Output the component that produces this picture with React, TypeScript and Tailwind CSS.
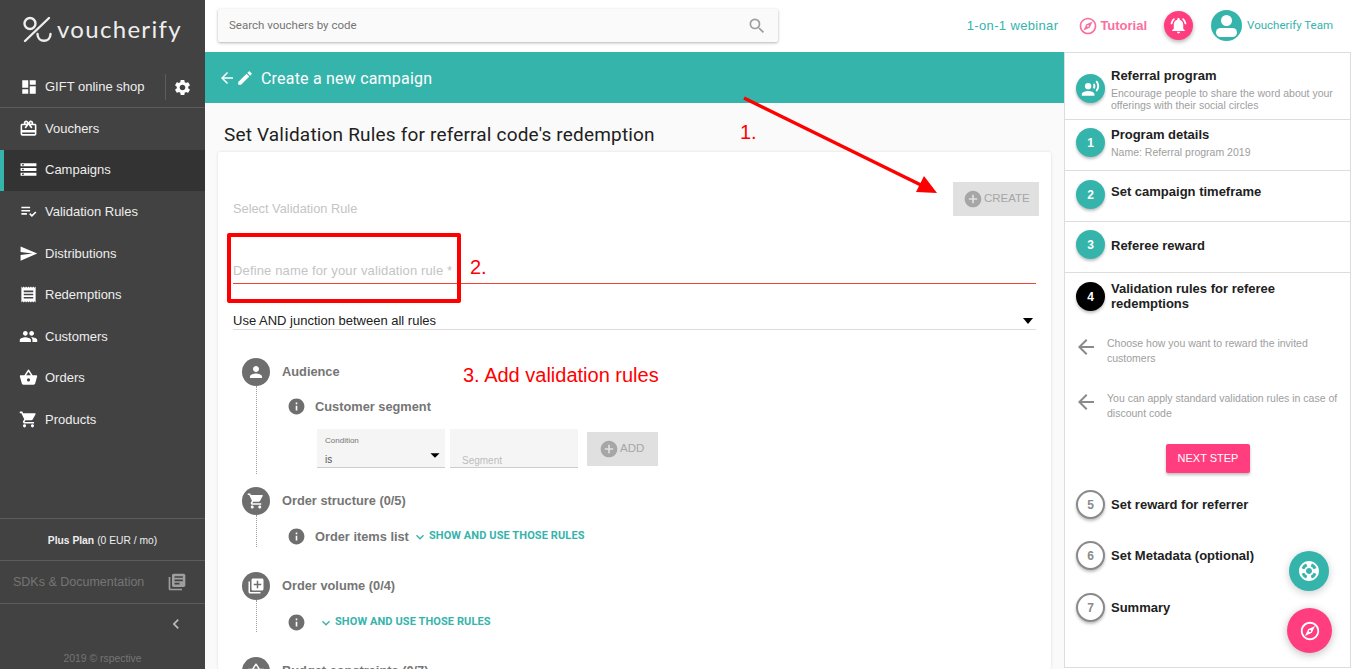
import {
  MdAddCircle,
  MdArrowBack,
  MdArrowDropDown,
  MdCardGiftcard,
  MdChevronLeft,
  MdDashboard,
  MdEdit,
  MdExpandMore,
  MdInfo,
  MdLibraryAdd,
  MdLibraryBooks,
  MdNotificationsActive,
  MdOutlineExplore,
  MdPeople,
  MdPerson,
  MdPlaylistAddCheck,
  MdReceipt,
  MdRecordVoiceOver,
  MdSearch,
  MdSend,
  MdSettings,
  MdShoppingBasket,
  MdShoppingCart,
  MdStorage,
  MdSupport,
} from 'react-icons/md';

const navItems = [
  { label: 'Vouchers', icon: MdCardGiftcard },
  { label: 'Campaigns', icon: MdStorage, active: true },
  { label: 'Validation Rules', icon: MdPlaylistAddCheck },
  { label: 'Distributions', icon: MdSend },
  { label: 'Redemptions', icon: MdReceipt },
  { label: 'Customers', icon: MdPeople },
  { label: 'Orders', icon: MdShoppingBasket },
  { label: 'Products', icon: MdShoppingCart },
];

function Sidebar() {
  return (
    <aside className="w-[205px] h-full shrink-0 flex flex-col bg-[#424242] text-[#eeeeee] font-['Liberation_Sans',sans-serif]">
      <div className="h-[65px] shrink-0 flex items-center pl-[22px] pb-[6px]">
        <svg width="30" height="28" viewBox="0 0 30 28" fill="none" stroke="#eeeeee" strokeWidth="2.4" strokeLinecap="round">
          <circle cx="8" cy="7.5" r="5.5" />
          <path d="M27 2 3 25" />
          <path d="M15.5 18c0 9 13 9 13 0" />
        </svg>
        <span className="ml-[5px] mt-[-2px] text-[24px] leading-none font-['Lato',sans-serif] font-normal tracking-[1.3px] text-[#eeeeee]">voucherify</span>
      </div>
      <div className="h-[43px] shrink-0 flex items-center pl-[20px] pt-[2px] border-b border-[#5c5c5c]">
        <MdDashboard size={18} className="text-white" />
        <span className="ml-[7px] text-[13px] flex-1">GIFT online shop</span>
        <div className="w-[1px] h-[26px] bg-[#5c5c5c]" />
        <MdSettings size={19} className="text-white ml-[7px] mr-[13px]" />
      </div>
      <nav className="flex flex-col">
        {navItems.map((item) => (
          <div
            key={item.label}
            className={`h-[41.5px] flex items-center text-[13px] ${
              item.active ? 'bg-[#333333] border-l-[4px] border-[#35b4ab] pl-[16px] pb-[1px]' : 'pl-[20px]'
            }`}
          >
            <item.icon size={19} className="text-white shrink-0 -ml-[1px]" />
            <span className="ml-[7px]">{item.label}</span>
          </div>
        ))}
      </nav>
      <div className="mt-auto">
        <div className="h-[42px] flex items-center justify-center pt-[2px] border-t border-[#5c5c5c] text-[10.3px] text-[#eeeeee]">
          <b className="mr-[3px]">Plus Plan</b> (0 EUR / mo)
        </div>
        <div className="h-[43px] flex items-center pl-[13px] border-t border-[#5c5c5c] text-[12.5px] text-[#757575]">
          <span className="flex-1">SDKs &amp; Documentation</span>
          <MdLibraryBooks size={20} className="text-[#9e9e9e] mr-[18px]" />
        </div>
        <div className="h-[40px] flex items-center justify-end border-t border-[#5c5c5c] pr-[19px]">
          <MdChevronLeft size={20} className="text-[#bdbdbd]" />
        </div>
        <div className="h-[26px] pt-[8px] text-center text-[10.4px] leading-[15px] text-[#757575]">2019 © rspective</div>
      </div>
    </aside>
  );
}

function TopBar() {
  return (
    <header className="h-[52px] shrink-0 flex items-center pb-[1px] bg-white font-['Liberation_Sans',sans-serif]">
      <div className="ml-[13px] w-[560px] h-[33px] flex items-center justify-between px-[11px] bg-[#fafafa] rounded-[2px] shadow-[0_1px_3px_rgba(0,0,0,0.3)]">
        <span className="text-[11.5px] text-[#757575] font-['Roboto',sans-serif]">Search vouchers by code</span>
        <MdSearch size={20} className="text-[#9e9e9e]" />
      </div>
      <span className="ml-auto text-[13px] text-[#35b4ab] tracking-[0.35px]">1-on-1 webinar</span>
      <span className="ml-[20px] flex items-center text-[13px] font-bold text-[#f96f9f]">
        <MdOutlineExplore size={20} className="text-[#f96f9f] mr-[2px]" />
        Tutorial
      </span>
      <div className="ml-[17px] w-[29px] h-[29px] rounded-full bg-[#ff3d7f] flex items-center justify-center shadow-[0_2px_4px_rgba(0,0,0,0.3)]">
        <MdNotificationsActive size={19} className="text-white" />
      </div>
      <div className="ml-[18px] w-[31px] h-[31px] rounded-full bg-[#35b4ab] flex items-center justify-center overflow-hidden">
        <div className="flex flex-col items-center">
          <div className="w-[11px] h-[11px] rounded-full bg-white" />
          <div className="w-[21px] h-[9px] mt-[2px] rounded-full bg-white" />
        </div>
      </div>
      <span className="ml-[5px] mr-[18px] text-[11.5px] text-[#35b4ab] font-['Roboto',sans-serif]">Voucherify Team</span>
    </header>
  );
}

function SectionHead({ icon: Icon, title, size = 18 }: { icon: any; title: string; size?: number }) {
  return (
    <div className="flex items-center">
      <div className="w-[28px] h-[28px] shrink-0 rounded-full bg-[#6e6e6e] flex items-center justify-center">
        <Icon size={size} className="text-white" />
      </div>
      <span className="ml-[12px] text-[12.8px] font-bold text-[#757575]">{title}</span>
    </div>
  );
}

function Dotted({ height }: { height: number }) {
  return <div className="ml-[14px] w-0 border-l border-dotted border-[#9e9e9e] absolute top-[28px]" style={{ height }} />;
}

function ShowRules() {
  return (
    <span className="flex items-center text-[11px] font-bold text-[#35b4ab] font-['Roboto',sans-serif] tracking-[0.1px]">
      <MdExpandMore size={16} className="mr-[1px]" />
      SHOW AND USE THOSE RULES
    </span>
  );
}

function RuleForm() {
  return (
    <div className="flex-1 min-w-0 bg-white rounded-[2px] shadow-[0_0_3px_rgba(0,0,0,0.12)] mr-[2px] px-[15px] overflow-hidden">
      <div className="flex items-end justify-between pt-[30px]">
        <span className="text-[12.8px] text-[#c4c4c4] leading-[15px]">Select Validation Rule</span>
        <div className="w-[86px] h-[34px] mr-[-3px] pb-[1px] bg-[#e0e0e0] flex items-center pl-[10px] text-[11.5px] text-[#a6a6a6]">
          <MdAddCircle size={20} className="text-[#a6a6a6] mr-[1px]" />
          CREATE
        </div>
      </div>
      <div className="mt-[46px] h-[22px] border-b border-[#f44336] text-[13px] leading-[18px] text-[#c4c4c4] tracking-[0.14px]">
        Define name for your validation rule *
      </div>
      <div className="mt-[28px] h-[18px] flex items-center justify-between border-b border-[#dddddd] text-[13px] text-[#212121] pr-[3px]">
        <span>Use AND junction between all rules</span>
        <span className="w-0 h-0 border-x-[5px] border-x-transparent border-t-[6px] border-t-black" />
      </div>

      <div className="relative mt-[28px] ml-[9px] h-[119px]">
        <SectionHead icon={MdPerson} title="Audience" />
        <Dotted height={88} />
        <div className="flex items-center ml-[46px] mt-[11px]">
          <MdInfo size={19} className="text-[#6e6e6e] -ml-[1px]" />
          <span className="ml-[9px] text-[12.8px] font-bold text-[#757575]">Customer segment</span>
        </div>
        <div className="flex items-center ml-[75px] mt-[13px]">
          <div className="relative w-[128px] h-[39px] bg-[#f5f5f5] border-b border-[#cccccc] px-[8px]">
            <div className="text-[8px] text-[#757575] mt-[6px]">Condition</div>
            <div className="text-[10px] text-[#555555] mt-[5px]">is</div>
            <MdArrowDropDown size={22} className="absolute right-[-1px] top-[15px] text-black" />
          </div>
          <div className="w-[128px] h-[39px] ml-[5px] bg-[#f5f5f5] border-b border-[#cccccc] px-[12px] pt-[24px] text-[10px] text-[#bdbdbd]">Segment</div>
          <div className="w-[71px] h-[34px] ml-[9px] mt-[1px] pb-[1px] bg-[#e0e0e0] flex items-center pl-[12px] text-[11.5px] text-[#a6a6a6]">
            <MdAddCircle size={20} className="text-[#a6a6a6] mr-[1px]" />
            ADD
          </div>
        </div>
      </div>

      <div className="relative mt-[10px] ml-[9px] h-[85px]">
        <SectionHead icon={MdShoppingCart} title="Order structure (0/5)" />
        <Dotted height={32} />
        <div className="flex items-center ml-[46px] mt-[12px]">
          <MdInfo size={19} className="text-[#6e6e6e] -ml-[1px]" />
          <span className="ml-[9px] mr-[3px] text-[12.8px] font-bold text-[#757575]">Order items list</span>
          <ShowRules />
        </div>
      </div>

      <div className="relative ml-[9px] h-[85px]">
        <SectionHead icon={MdLibraryAdd} title="Order volume (0/4)" />
        <Dotted height={32} />
        <div className="flex items-center ml-[46px] mt-[13px]">
          <MdInfo size={19} className="text-[#6e6e6e] -ml-[1px]" />
          <span className="ml-[12px]">
            <ShowRules />
          </span>
        </div>
      </div>

      <div className="ml-[9px]">
        <SectionHead icon={MdShoppingBasket} title="Budget constraints (0/7)" />
      </div>
    </div>
  );
}

function StepCircle({ n, kind }: { n: string; kind: 'done' | 'current' | 'todo' }) {
  const cls =
    kind === 'done'
      ? 'bg-[#35b4ab] text-white'
      : kind === 'current'
        ? 'bg-black text-white'
        : 'bg-white border-2 border-[#8a8a8a] text-[#8a8a8a]';
  return (
    <div className={`w-[29px] h-[29px] shrink-0 rounded-full flex items-center justify-center text-[12px] font-bold shadow-[0_2px_3px_rgba(0,0,0,0.25)] ${cls}`}>
      {n}
    </div>
  );
}

function StepsPanel() {
  const title = 'text-[13px] leading-[15px] font-bold text-[#212121]';
  const sub = 'text-[10.5px] leading-[12px] text-[#9e9e9e]';
  return (
    <div className="relative w-[287px] shrink-0 h-[616px] bg-white border border-[#dddddd] font-['Liberation_Sans',sans-serif]">
      <div className="h-[67px] flex items-center pl-[11px] border-b border-[#dddddd]">
        <div className="w-[29px] h-[29px] shrink-0 rounded-full bg-[#35b4ab] flex items-center justify-center shadow-[0_2px_3px_rgba(0,0,0,0.25)] mt-[5px]">
          <MdRecordVoiceOver size={19} className="text-white" />
        </div>
        <div className="ml-[6px] mt-[7px]">
          <div className={title}>Referral program</div>
          <div className={`${sub} mt-[4px] pr-[10px]`}>Encourage people to share the word about your offerings with their social circles</div>
        </div>
      </div>
      <div className="h-[51px] flex items-start pt-[8px] pl-[11px] border-b border-[#dddddd]">
        <StepCircle n="1" kind="done" />
        <div className="ml-[6px] mt-[-1px]">
          <div className={title}>Program details</div>
          <div className={`${sub} mt-[4px]`}>Name: Referral program 2019</div>
        </div>
      </div>
      <div className="h-[51px] flex items-start pt-[9px] pl-[11px] border-b border-[#dddddd]">
        <StepCircle n="2" kind="done" />
        <div className={`ml-[6px] mt-[4px] ${title}`}>Set campaign timeframe</div>
      </div>
      <div className="h-[51px] flex items-start pt-[8px] pl-[11px] border-b border-[#dddddd]">
        <StepCircle n="3" kind="done" />
        <div className={`ml-[6px] mt-[8px] ${title}`}>Referee reward</div>
      </div>
      <div className="pt-[9px] pl-[11px]">
        <div className="flex items-center">
          <StepCircle n="4" kind="current" />
          <div className={`ml-[6px] mt-[-1px] ${title}`}>Validation rules for referee<br />redemptions</div>
        </div>
        <div className="flex items-start mt-[25px]">
          <MdArrowBack size={24} className="text-[#8a8a8a] shrink-0 -ml-[2px] mt-[-1px]" />
          <div className="ml-[9px] text-[10.5px] leading-[15px] text-[#9e9e9e]">Choose how you want to reward the invited<br />customers</div>
        </div>
        <div className="flex items-start mt-[25px]">
          <MdArrowBack size={24} className="text-[#8a8a8a] shrink-0 -ml-[2px] mt-[-1px]" />
          <div className="ml-[9px] text-[10.5px] leading-[15px] text-[#9e9e9e] whitespace-nowrap">You can apply standard validation rules in case of<br />discount code</div>
        </div>
        <div className="mt-[23px] ml-[90px] w-[84px] h-[29px] rounded-[2px] bg-[#ff3d7f] flex items-center justify-center text-[11px] text-white shadow-[0_2px_3px_rgba(0,0,0,0.25)]">NEXT STEP</div>
        <div className="flex items-center mt-[17px]">
          <StepCircle n="5" kind="todo" />
          <div className={`ml-[6px] ${title}`}>Set reward for referrer</div>
        </div>
        <div className="flex items-center mt-[22px]">
          <StepCircle n="6" kind="todo" />
          <div className={`ml-[6px] ${title}`}>Set Metadata (optional)</div>
        </div>
        <div className="flex items-center mt-[23px]">
          <StepCircle n="7" kind="todo" />
          <div className={`ml-[6px] ${title}`}>Summary</div>
        </div>
      </div>
      <div className="absolute left-[224px] top-[498px] w-[40px] h-[40px] rounded-full bg-[#35b4ab] flex items-center justify-center shadow-[0_2px_8px_rgba(0,0,0,0.2)]">
        <MdSupport size={24} className="text-white" />
      </div>
      <div className="absolute left-[222px] top-[555px] w-[45px] h-[45px] rounded-full bg-[#ff3d7f] flex items-center justify-center shadow-[0_2px_8px_rgba(0,0,0,0.25)]">
        <MdOutlineExplore size={22} className="text-white" />
      </div>
    </div>
  );
}

function Annotations() {
  return (
    <div className="absolute inset-0 pointer-events-none font-['Liberation_Sans',sans-serif] text-[#ff0000]">
      <svg className="absolute left-0 top-0" width="1351" height="669">
        <path d="M744 98 925 187" stroke="#ff0000" strokeWidth="3.5" />
        <path d="M937 193 916 192 924 176Z" fill="#ff0000" />
      </svg>
      <span className="absolute left-[740px] top-[121px] text-[20px] leading-[22px]">1.</span>
      <div className="absolute left-[227px] top-[233px] w-[234px] h-[70px] border-[4px] border-[#ff0000] rounded-[2px]" />
      <span className="absolute left-[470px] top-[256px] text-[20px] leading-[22px]">2.</span>
      <span className="absolute left-[463px] top-[364px] text-[20px] leading-[22px]">3. Add validation rules</span>
    </div>
  );
}

export default function App() {
  return (
    <div className="relative flex w-[1351px] h-[669px] overflow-hidden bg-white">
      <Sidebar />
      <div className="flex-1 min-w-0 flex flex-col h-full">
        <TopBar />
        <div className="flex flex-1 min-h-0">
          <main className="flex-1 min-w-0 flex flex-col bg-[#fafafa] font-['Liberation_Sans',sans-serif]">
            <div className="h-[51px] shrink-0 flex items-center pl-[13px] bg-[#35b4ab] text-white">
              <MdArrowBack size={18} />
              <MdEdit size={18} />
              <span className="ml-[7px] mt-[3px] text-[16px] font-['Roboto',sans-serif] tracking-[0.2px]">Create a new campaign</span>
            </div>
            <h1 className="ml-[19px] mt-[20px] text-[19px] leading-[24px] font-normal text-[#212121] font-['Roboto',sans-serif] tracking-[0.18px]">
              Set Validation Rules for referral code's redemption
            </h1>
            <div className="flex flex-1 min-h-0 ml-[13px] mr-[11px] mt-[5px]">
              <RuleForm />
            </div>
          </main>
          <StepsPanel />
        </div>
      </div>
      <Annotations />
    </div>
  );
}
